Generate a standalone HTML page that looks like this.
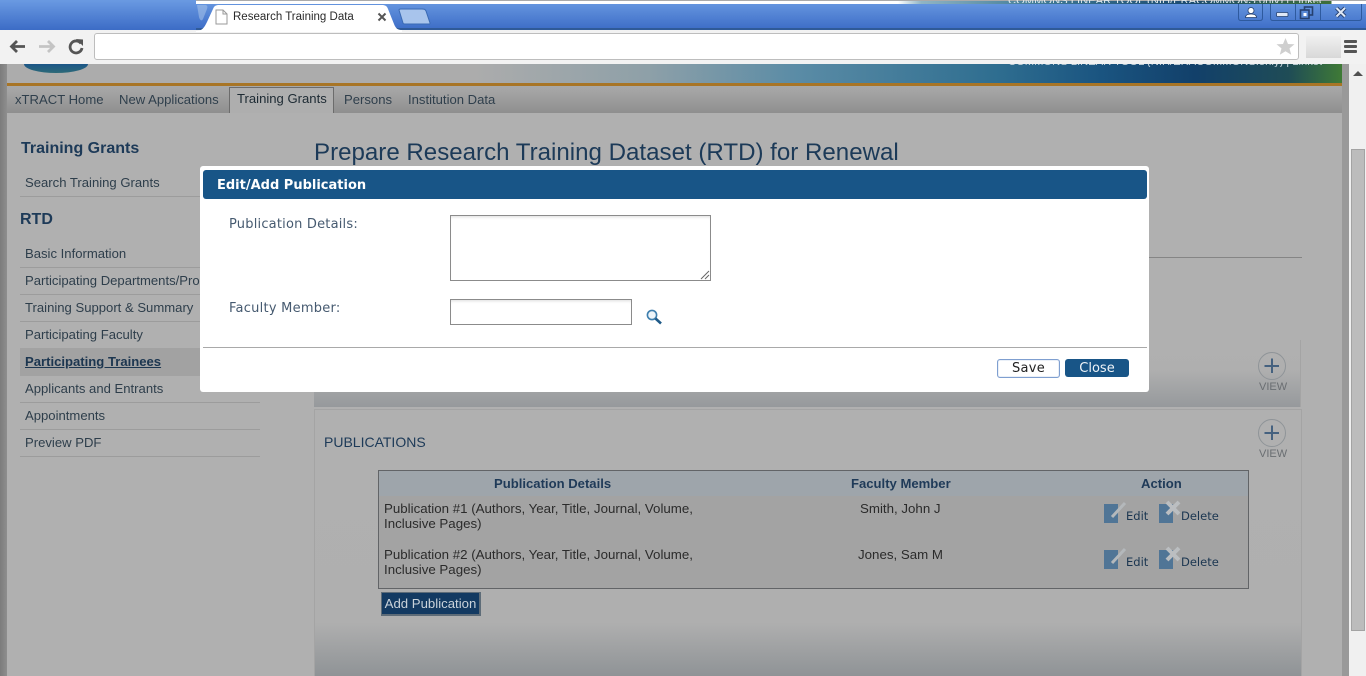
<!DOCTYPE html>
<html lang="en">
<head>
<meta charset="utf-8">
<title>Research Training Data</title>
<style>
html,body{margin:0;padding:0;width:1366px;height:676px;overflow:hidden;background:#b0b0b0;}
body{position:relative;font-family:"Liberation Sans",sans-serif;}
.a{position:absolute;white-space:nowrap;}
.nav{font-size:13.1px;color:#2f3f4c;top:92px;line-height:16px;}
.side{font-size:13.1px;color:#2e3e4b;left:25px;line-height:16px;}
.rule{position:absolute;left:20px;width:240px;height:1px;background:#9c9c9c;}
.td{font-size:13.3px;color:#2b2b2b;line-height:15px;}
.th{font-size:13.1px;font-weight:bold;color:#1f3a58;line-height:16px;}
.lnk{font-family:"DejaVu Sans",sans-serif;font-size:11.5px;color:#1a3550;line-height:14px;}
.dj{font-family:"DejaVu Sans",sans-serif;}
.view{font-size:11px;color:#6a6e72;line-height:12px;}
</style>
</head>
<body>
<!-- page background -->
<div class="a" style="left:0;top:64px;width:7px;height:612px;background:linear-gradient(90deg,#7c7c7c,#8e8e8e);"></div>
<div class="a" style="left:7px;top:64px;width:1335px;height:19px;background:linear-gradient(90deg,#acacac 0,#acacac 35%,#8ea0a8 48%,#5b8ca6 59%,#2f6e90 74%,#1a5480 82%,#12406a 89%,#1f4c56 96%,#3f7a36 100%);"></div>
<div class="a" style="left:7px;top:83px;width:1335px;height:3px;background:#a87526;"></div>
<div class="a" style="left:7px;top:86px;width:1335px;height:27px;background:linear-gradient(#a9a9a9,#8f8f8f);"></div>
<div class="a" style="left:1342px;top:64px;width:7px;height:612px;background:#999;"></div>
<div class="a" style="left:1349px;top:64px;width:17px;height:612px;background:#f0f0f0;"></div>
<div class="a" style="left:1351px;top:149px;width:12px;height:480px;background:#bcbcbc;border:1px solid #a3a3a3;"></div>
<div class="a" style="left:1353px;top:71px;width:0;height:0;border-left:5px solid transparent;border-right:5px solid transparent;border-bottom:5px solid #505050;"></div>
<!-- blue logo fragment -->
<div class="a" style="left:24px;top:64px;width:64px;height:9px;background:linear-gradient(#1c5688,#2d6a78);border-radius:0 0 32px 32px/0 0 9px 9px;"></div>
<div class="a" style="left:1008px;top:56px;height:11px;width:314px;overflow:hidden;font-size:11.2px;line-height:12px;color:#c8d6de;">COMMONS LINEAR TOOL (NIH/ERACOMMONS.only) | Linked Grants</div>

<!-- top nav -->
<div class="a nav" style="left:15px;">xTRACT Home</div>
<div class="a nav" style="left:119px;">New Applications</div>
<div class="a" style="left:229px;top:87px;width:103px;height:25px;background:#aeaeae;border:1px solid #6c6c6c;border-bottom:0;"></div>
<div class="a nav" style="left:237px;top:91px;color:#1d2a33;">Training Grants</div>
<div class="a nav" style="left:344px;">Persons</div>
<div class="a nav" style="left:408px;">Institution Data</div>

<!-- sidebar -->
<div class="a" style="left:21px;top:139px;font-size:16px;font-weight:bold;color:#1d3a58;line-height:19px;">Training Grants</div>
<div class="a side" style="top:175px;">Search Training Grants</div>
<div class="rule" style="top:196px;"></div>
<div class="a" style="left:20px;top:210px;font-size:16px;font-weight:bold;color:#1d3a58;line-height:19px;">RTD</div>
<div class="a side" style="top:246px;">Basic Information</div>
<div class="rule" style="top:267px;"></div>
<div class="a side" style="top:273px;">Participating Departments/Programs</div>
<div class="rule" style="top:294px;"></div>
<div class="a side" style="top:300px;">Training Support &amp; Summary</div>
<div class="rule" style="top:321px;"></div>
<div class="a side" style="top:327px;">Participating Faculty</div>
<div class="a" style="left:20px;top:348px;width:240px;height:28px;background:#a2a2a2;"></div>
<div class="a side" style="top:354px;font-weight:bold;text-decoration:underline;color:#1c3650;">Participating Trainees</div>
<div class="a side" style="top:381px;">Applicants and Entrants</div>
<div class="rule" style="top:402px;"></div>
<div class="a side" style="top:408px;">Appointments</div>
<div class="rule" style="top:429px;"></div>
<div class="a side" style="top:435px;">Preview PDF</div>
<div class="rule" style="top:456px;"></div>

<!-- main -->
<div class="a" style="left:314px;top:138px;font-size:24.1px;line-height:29px;color:#1c3a58;">Prepare Research Training Dataset (RTD) for Renewal</div>
<div class="a" style="left:1100px;top:257px;width:202px;height:1px;background:#858585;"></div>

<!-- panel 1 -->
<div class="a" style="left:314px;top:340px;width:987px;height:67px;background:linear-gradient(#b0b0b0 0,#afafaf 45%,#96999c 100%);border-right:1px solid #a4a4a4;box-sizing:border-box;"></div>
<div class="a" style="left:1258px;top:352px;width:26px;height:26px;border:1px solid #8f9498;border-radius:50%;"></div>
<svg class="a" style="left:1258px;top:352px;" width="28" height="28"><path d="M14 6.5V21M6.5 14H21" stroke="#45617f" stroke-width="2" fill="none"/></svg>
<div class="a view" style="left:1259px;top:381px;">VIEW</div>

<!-- panel 2 -->
<div class="a" style="left:314px;top:409px;width:988px;height:267px;box-sizing:border-box;border:1px solid #a4a4a4;border-bottom:0;background:linear-gradient(#b0b0b0 0,#afafaf 80%,#8f9396 100%);"></div>
<div class="a" style="left:324px;top:433px;font-size:14px;line-height:18px;color:#1d3a58;">PUBLICATIONS</div>
<div class="a" style="left:1258px;top:419px;width:26px;height:26px;border:1px solid #8f9498;border-radius:50%;"></div>
<svg class="a" style="left:1258px;top:419px;" width="28" height="28"><path d="M14 6.5V21M6.5 14H21" stroke="#45617f" stroke-width="2" fill="none"/></svg>
<div class="a view" style="left:1259px;top:448px;">VIEW</div>

<!-- table -->
<div class="a" style="left:378px;top:470px;width:871px;height:119px;box-sizing:border-box;border:1px solid #626467;background:#a3a3a3;"></div>
<div class="a" style="left:379px;top:471px;width:869px;height:25px;background:#9ea5ab;"></div>
<div class="a th" style="left:494px;top:476px;">Publication Details</div>
<div class="a th" style="left:851px;top:476px;">Faculty Member</div>
<div class="a th" style="left:1141px;top:476px;">Action</div>
<div class="a td" style="left:384px;top:501px;">Publication #1 (Authors, Year, Title, Journal, Volume,<br>Inclusive Pages)</div>
<div class="a td" style="left:384px;top:547px;">Publication #2 (Authors, Year, Title, Journal, Volume,<br>Inclusive Pages)</div>
<div class="a td" style="left:860px;top:501px;">Smith, John J</div>
<div class="a td" style="left:858px;top:547px;">Jones, Sam M</div>

<!-- edit/delete icons row 1 -->
<svg class="a" style="left:1104px;top:501px;" width="24" height="24"><rect x="0" y="3" width="14" height="19" fill="#507596"/><path d="M8 16L21 2" stroke="#b4b8bb" stroke-width="3" fill="none"/></svg>
<div class="a lnk" style="left:1126px;top:509px;">Edit</div>
<svg class="a" style="left:1159px;top:500px;" width="22" height="24"><rect x="0" y="4" width="14" height="19" fill="#507596"/><path d="M8 2L20 14M20 2L8 14" stroke="#bbbec1" stroke-width="4" fill="none"/></svg>
<div class="a lnk" style="left:1181px;top:509px;">Delete</div>
<!-- row 2 -->
<svg class="a" style="left:1104px;top:547px;" width="24" height="24"><rect x="0" y="3" width="14" height="19" fill="#507596"/><path d="M8 16L21 2" stroke="#b4b8bb" stroke-width="3" fill="none"/></svg>
<div class="a lnk" style="left:1126px;top:555px;">Edit</div>
<svg class="a" style="left:1159px;top:546px;" width="22" height="24"><rect x="0" y="4" width="14" height="19" fill="#507596"/><path d="M8 2L20 14M20 2L8 14" stroke="#bbbec1" stroke-width="4" fill="none"/></svg>
<div class="a lnk" style="left:1181px;top:555px;">Delete</div>

<!-- add publication -->
<div class="a" style="left:381px;top:592px;width:100px;height:24px;box-sizing:border-box;border:2px solid #5e6c78;border-top-width:1px;border-left-width:1px;background:#133a62;color:#c9d2da;font-size:13.2px;line-height:21px;text-align:center;">Add Publication</div>

<!-- modal -->
<div class="a" style="left:200px;top:166px;width:949px;height:226px;background:#fff;border-radius:3px;"></div>
<div class="a dj" style="left:203px;top:170px;width:944px;height:29px;background:#185587;border-radius:3px;color:#fff;font-size:13px;font-weight:bold;line-height:31px;text-indent:14px;">Edit/Add Publication</div>
<div class="a dj" style="left:229px;top:217px;font-size:13px;line-height:15px;color:#465a70;letter-spacing:.2px;">Publication Details:</div>
<div class="a dj" style="left:229px;top:301px;font-size:13px;line-height:15px;color:#465a70;letter-spacing:.25px;">Faculty Member:</div>
<div class="a" style="left:450px;top:215px;width:261px;height:66px;box-sizing:border-box;border:1px solid #8b8b8b;box-shadow:inset 0 3px 3px -2px #ddd;background:#fff;"></div>
<svg class="a" style="left:700px;top:270px;" width="10" height="10"><path d="M9 1L1 9M9 5L5 9" stroke="#666" stroke-width="1" fill="none"/></svg>
<div class="a" style="left:450px;top:299px;width:182px;height:26px;box-sizing:border-box;border:1px solid #8b8b8b;box-shadow:inset 0 3px 3px -2px #ddd;background:#fff;"></div>
<svg class="a" style="left:645px;top:308px;" width="18" height="18"><circle cx="7" cy="7" r="4.6" fill="#eef5fa" stroke="#3f7fae" stroke-width="1.6"/><path d="M10.5 10.5L16 15.5" stroke="#1f5a88" stroke-width="2.6" fill="none"/></svg>
<div class="a" style="left:203px;top:347px;width:944px;height:1px;background:#a9a9a9;"></div>
<div class="a dj" style="left:997px;top:359px;width:63px;height:19px;box-sizing:border-box;border:1px solid #7f9fd0;box-shadow:inset 0 0 1px #7f9fd0;border-radius:3px;background:#fff;color:#222;font-size:13px;line-height:18px;text-align:center;letter-spacing:.3px;">Save</div>
<div class="a dj" style="left:1065px;top:359px;width:64px;height:18px;background:#185587;border-radius:3px;color:#eef3f7;font-size:13px;line-height:19px;text-align:center;">Close</div>

<!-- browser chrome -->
<div class="a" style="left:0;top:0;width:1366px;height:30px;background:linear-gradient(#6a9ae2,#3c6cc6);"></div>
<div class="a" style="left:196px;top:0;width:1170px;height:1px;background:#aaa;"></div>
<div class="a" style="left:196px;top:1px;width:1170px;height:3px;background:linear-gradient(90deg,#fff 0,#fff 60%,#8fb4c4 62%,#3f7a96 72%,#1a4a70 85%,#3f6f38 97%,#fff 97.1%);"></div>
<div class="a" style="left:1008px;top:0;height:3px;width:314px;overflow:hidden;font-size:11.2px;line-height:2px;color:#dfe8ec;">COMMONS LINEAR TOOL (NIH/ERACOMMONS.only) | Linked Grants</div>
<div class="a" style="left:0;top:30px;width:1366px;height:34px;background:#f2f2f2;"></div>
<div class="a" style="left:196px;top:28px;width:1170px;height:2px;background:#2f5a98;"></div>
<!-- tab -->
<svg class="a" style="left:196px;top:4px;" width="240" height="28"><path d="M0 27C6 27 8 24 11 18L17 5C18 2 20 1 23 1H186C189 1 191 2 192 5L198 20C200 25 202 26 206 26L206 28H0Z" fill="#fff"/><path d="M1 1H9C11 1 12 2 11 5L7 15C6 17 4 17 3 13Z" fill="#a9c4ea" opacity=".55"/><path d="M203 6C203 5 204 5 205 5H226C228 5 229 5 230 7L234 19C234 20 234 20 232 20H209C208 20 207 20 207 19Z" fill="#a8c4ec" stroke="#3a6ab4" stroke-width="1"/></svg>
<svg class="a" style="left:215px;top:9px;" width="13" height="16"><path d="M1 1H8L12 5V15H1Z" fill="#fff" stroke="#9a9a9a"/><path d="M8 1V5H12" fill="none" stroke="#9a9a9a"/></svg>
<div class="a" style="left:233px;top:10px;font-size:11.5px;line-height:15px;color:#2a2a2a;">Research Training Data</div>
<svg class="a" style="left:377px;top:12px;" width="10" height="10"><path d="M1.5 1.5L8.5 8.5M8.5 1.5L1.5 8.5" stroke="#555" stroke-width="2" fill="none"/></svg>
<!-- window controls -->
<svg class="a" style="left:1238px;top:3px;" width="128" height="19">
<path d="M.5 1V15Q.5 17.5 3 17.5H22Q24.5 17.5 24.5 15V1" fill="none" stroke="#2e5a9e"/>
<path d="M32.5 1V15Q32.5 17.5 35 17.5H121Q123.5 17.5 123.5 15V1" fill="none" stroke="#2e5a9e"/>
<path d="M57.5 1V17.5M82.5 1V17.5" stroke="#2e5a9e"/>
<circle cx="13" cy="7.5" r="3" fill="#fff" stroke="#26406e" stroke-width=".8"/><path d="M7.5 14.5Q7.5 11 13 11Q18.5 11 18.5 14.5Z" fill="#fff" stroke="#26406e" stroke-width=".8"/>
<rect x="38.5" y="9.5" width="11.5" height="4" rx="1" fill="#dfe8f6" stroke="#26406e" stroke-width=".8"/>
<rect x="66.5" y="4" width="8" height="8" fill="none" stroke="#26406e" stroke-width="1.6"/><rect x="62.5" y="7" width="8.5" height="8.5" fill="#5a8ad6" stroke="#26406e" stroke-width="1.6"/><rect x="65.5" y="10" width="3" height="3" fill="#fff"/>
<path d="M98.5 5L107 13.5M107 5L98.5 13.5" stroke="#26406e" stroke-width="4" fill="none"/><path d="M98.5 5L107 13.5M107 5L98.5 13.5" stroke="#dfe8f6" stroke-width="2" fill="none"/>
</svg>
<!-- toolbar icons -->
<svg class="a" style="left:8px;top:37px;" width="80" height="20">
<path d="M17 9.5H4M9 4L3.5 9.5L9 15" stroke="#555" stroke-width="2.8" fill="none"/>
<path d="M31 9.5H45M40 4L45.5 9.5L40 15" stroke="#c4c4c4" stroke-width="2.8" fill="none"/>
<path d="M73 6.5A6 6 0 1 0 74 11" stroke="#555" stroke-width="2.8" fill="none"/><path d="M68 2L75 2.5V9Z" fill="#555"/>
</svg>
<!-- omnibox -->
<div class="a" style="left:94px;top:33px;width:1205px;height:27px;box-sizing:border-box;background:#fff;border:1px solid #bdbdbd;border-radius:3px;"></div>
<svg class="a" style="left:1276px;top:37px;" width="19" height="19"><path d="M9.5 1L12 7L18.5 7.3L13.5 11.4L15.2 17.8L9.5 14.2L3.8 17.8L5.5 11.4L.5 7.3L7 7Z" fill="#cfcfcf"/></svg>
<div class="a" style="left:1306px;top:36px;width:35px;height:22px;background:linear-gradient(#f0f0f0,#d8d8d8);"></div>
<div class="a" style="left:1344px;top:40px;width:13px;height:3px;background:#555;border-radius:1px;"></div>
<div class="a" style="left:1344px;top:45px;width:13px;height:3px;background:#555;border-radius:1px;"></div>
<div class="a" style="left:1344px;top:50px;width:13px;height:3px;background:#555;border-radius:1px;"></div>
</body>
</html>
